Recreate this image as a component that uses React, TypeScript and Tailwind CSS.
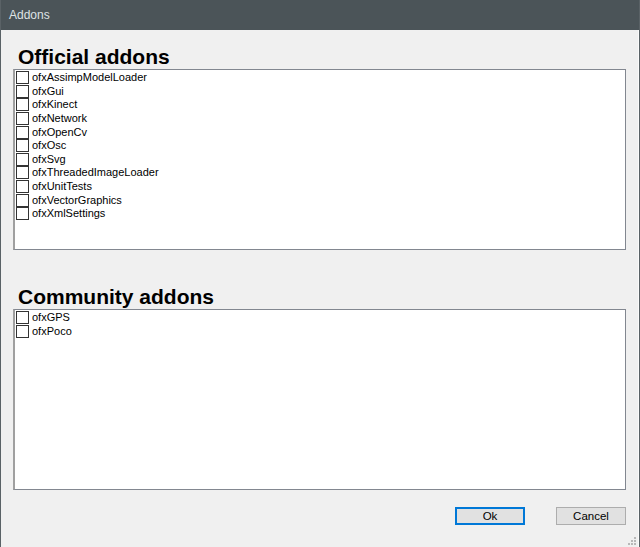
import React from "react";

const official = [
  "ofxAssimpModelLoader",
  "ofxGui",
  "ofxKinect",
  "ofxNetwork",
  "ofxOpenCv",
  "ofxOsc",
  "ofxSvg",
  "ofxThreadedImageLoader",
  "ofxUnitTests",
  "ofxVectorGraphics",
  "ofxXmlSettings",
];
const community = ["ofxGPS", "ofxPoco"];

function Item({ label }: { label: string }) {
  return (
    <div className="flex items-center h-[13.6px]">
      <div className="w-[13px] h-[13px] border border-[#333333] bg-white shrink-0" />
      <span className="ml-[3px] text-[11px] leading-[13px] text-black">{label}</span>
    </div>
  );
}

function ListBox({ items, h }: { items: string[]; h: string }) {
  return (
    <div
      className={`mx-[12px] ${h} bg-white border border-[#828790] border-l-[2px] border-t-[1px] border-l-[#a0a0a0] pl-[1px] pt-[1px]`}
    >
      {items.map((i) => (
        <Item key={i} label={i} />
      ))}
    </div>
  );
}

export default function App() {
  return (
    <div
      className="w-[640px] h-[547px] flex flex-col bg-[#f0f0f0] border-l border-r border-[#5a6266] overflow-hidden"
      style={{ fontFamily: '"Liberation Sans", Arial, sans-serif' }}
    >
      <div className="h-[30px] bg-[#4b5458] flex items-center pl-[8px] text-[12px] text-[#dfe3e5] shrink-0">
        Addons
      </div>
      <div className="flex-1 flex flex-col relative border-r border-[#fbfbfb]">
        <div className="h-[39px] flex items-end pl-[17px] pb-[1px]">
          <span className="text-[21px] font-bold leading-[22px] text-black">Official addons</span>
        </div>
        <ListBox items={official} h="h-[181px]" />
        <div className="h-[59px] flex items-end pl-[17px] pb-[1px]">
          <span className="text-[21px] font-bold leading-[22px] text-black">Community addons</span>
        </div>
        <ListBox items={community} h="h-[181px]" />
        <div className="flex justify-end gap-[31px] pr-[12px] mt-[17px]">
          <button className="w-[70px] h-[18px] bg-[#e1e1e1] border-2 border-[#0078d7] text-[11.5px] leading-[14px] text-black flex items-center justify-center">
            Ok
          </button>
          <button className="w-[70px] h-[18px] bg-[#e1e1e1] border border-[#adadad] text-[11.5px] leading-[14px] text-black flex items-center justify-center">
            Cancel
          </button>
        </div>
        <svg className="absolute right-[1px] bottom-[1px]" width="10" height="10" viewBox="0 0 10 10">
          {[
            [7, 1],
            [4, 4],
            [7, 4],
            [1, 7],
            [4, 7],
            [7, 7],
          ].map(([x, y], i) => (
            <rect key={i} x={x} y={y} width="2" height="2" fill="#b8b8b8" />
          ))}
        </svg>
      </div>
    </div>
  );
}
